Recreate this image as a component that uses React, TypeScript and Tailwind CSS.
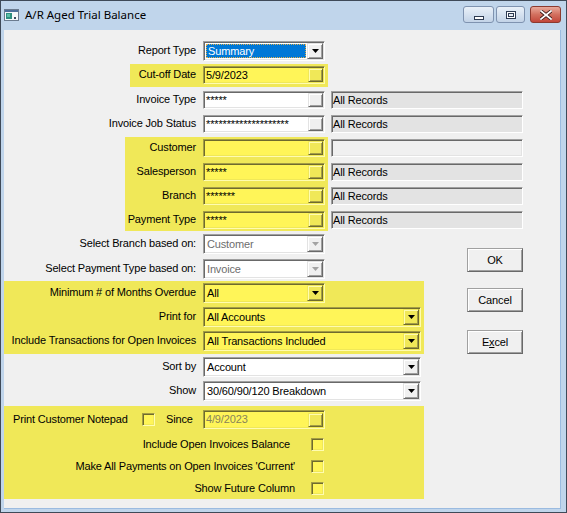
import type { ReactNode } from "react";

// classic Win32 3D edges, plain and under the yellow highlight
const SUNKEN =
  "border border-t-[#a0a0a0] border-l-[#a0a0a0] border-b-white border-r-white shadow-[inset_1px_1px_0_#696969,inset_-1px_-1px_0_#e3e3e3]";
const SUNKEN_HI =
  "border border-t-[#a39d45] border-l-[#a39d45] border-b-[#fffcb0] border-r-[#fffcb0] shadow-[inset_1px_1px_0_#6f6b2d,inset_-1px_-1px_0_#f0e858]";
const RAISED =
  "border border-t-[#e3e3e3] border-l-[#e3e3e3] border-b-[#696969] border-r-[#696969] bg-[#f0f0f0] shadow-[inset_1px_1px_0_#ffffff,inset_-1px_-1px_0_#a0a0a0]";
const RAISED_HI =
  "border border-t-[#f0e858] border-l-[#f0e858] border-b-[#6f6b2d] border-r-[#6f6b2d] bg-[#f0e858] shadow-[inset_1px_1px_0_#fffcb0,inset_-1px_-1px_0_#a39d45]";

function Arrow({ disabled }: { disabled?: boolean }) {
  return (
    <svg width="7" height="4" viewBox="0 0 7 4">
      <path d="M0 0h7L3.5 4z" fill={disabled ? "#a3a3a3" : "#000"} />
    </svg>
  );
}

function Select({
  value,
  w = "w-[122px]",
  hi,
  disabled,
  focus,
}: {
  value: string;
  w?: string;
  hi?: boolean;
  disabled?: boolean;
  focus?: boolean;
}) {
  return (
    <div
      className={`flex h-[20px] shrink-0 items-center ${w} ${
        hi ? SUNKEN_HI + " bg-[#fff558]" : SUNKEN + " bg-white"
      }`}
    >
      <div className="flex min-w-0 flex-1 items-center pl-[1px]">
        {focus ? (
          <span className="mx-[1px] flex h-[14px] flex-1 items-center border border-dotted border-[#e2b04e] bg-[#0078d7] pl-[1px] text-white">
            {value}
          </span>
        ) : (
          <span className={`pl-[2px] ${disabled ? "text-[#6d6d6d]" : ""}`}>{value}</span>
        )}
      </div>
      <span
        className={`mr-[1px] flex h-[16px] w-[16px] shrink-0 items-center justify-center ${
          hi ? RAISED_HI : RAISED
        }`}
      >
        <Arrow disabled={disabled} />
      </span>
    </div>
  );
}

function Field({
  value = "",
  hi,
  muted,
  h = "h-[18px]",
}: {
  value?: string;
  hi?: boolean;
  muted?: boolean;
  h?: string;
}) {
  return (
    <div
      className={`flex w-[122px] shrink-0 items-center ${h} ${
        hi ? SUNKEN_HI + " bg-[#fff558]" : SUNKEN + " bg-white"
      }`}
    >
      <span
        className={`min-w-0 flex-1 overflow-hidden whitespace-nowrap pl-[2px] ${
          muted ? "text-[#87845a]" : ""
        }`}
      >
        {value}
      </span>
      <span className={`mr-[1px] h-[14px] w-[15px] shrink-0 ${hi ? RAISED_HI : RAISED}`} />
    </div>
  );
}

function Info({ value }: { value?: string }) {
  return (
    <div
      className={`flex h-[18px] w-[192px] shrink-0 items-center ${SUNKEN} ${
        value ? "bg-[#e3e3e3]" : "bg-[#f0f0f0]"
      }`}
    >
      <span className="pl-[1px]">{value}</span>
    </div>
  );
}

function Check() {
  return <span className={`h-[13px] w-[13px] shrink-0 bg-[#fff558] ${SUNKEN_HI}`} />;
}

function Btn({ children }: { children: ReactNode }) {
  return (
    <div className="flex h-[24px] w-[56px] items-center justify-center border border-t-[#a0a0a0] border-l-[#a0a0a0] border-b-[#696969] border-r-[#696969] bg-[#f0f0f0] shadow-[inset_1px_1px_0_#ffffff,inset_-1px_-1px_0_#a0a0a0]">
      {children}
    </div>
  );
}

function Row({
  label,
  lw = "w-[199px]",
  children,
  className = "",
}: {
  label: string;
  lw?: string;
  children: ReactNode;
  className?: string;
}) {
  return (
    <div className={`flex items-center ${className}`}>
      <span className={`${lw} -mt-[2px] shrink-0 whitespace-nowrap pr-[7px] text-right`}>{label}</span>
      {children}
    </div>
  );
}

function AppIcon() {
  return (
    <svg width="15" height="12" viewBox="0 0 15 12">
      <rect x="0.5" y="0.5" width="14" height="11" fill="#f4f7fa" stroke="#6b7b8f" />
      <rect x="1" y="1" width="13" height="2" fill="#4d6f9a" />
      <rect x="2" y="4" width="6" height="6" fill="#2f8f80" />
      <rect x="3" y="5" width="3" height="3" fill="#5cc0a8" />
      <rect x="10" y="8" width="2" height="2" fill="#3c4a5c" />
    </svg>
  );
}

function CaptionButton({ kind }: { kind: "min" | "max" | "close" }) {
  if (kind === "close") {
    return (
      <div className="flex h-[17px] w-[31px] items-center justify-center rounded-[3px] border border-[#8c3a2f] bg-gradient-to-b from-[#e8a99b] via-[#d2705f] to-[#c2463a]">
        <svg width="12" height="10" viewBox="0 0 12 10">
          <path
            d="M1 1l10 8M11 1L1 9"
            stroke="#3a1a16"
            strokeWidth="3.4"
            strokeLinecap="square"
          />
          <path d="M1 1l10 8M11 1L1 9" stroke="#fff" strokeWidth="1.8" strokeLinecap="square" />
        </svg>
      </div>
    );
  }
  return (
    <div
      className={`flex h-[17px] items-center justify-center rounded-[3px] border border-[#7f93b0] bg-gradient-to-b from-[#eaf1f9] via-[#d6e2f0] to-[#c3d3e7] ${
        kind === "min" ? "w-[31px]" : "w-[29px]"
      }`}
    >
      {kind === "min" ? (
        <svg width="10" height="12" viewBox="0 0 10 12">
          <rect x="0.5" y="7.5" width="9" height="3" fill="#fff" stroke="#2d3b52" />
        </svg>
      ) : (
        <svg width="10" height="8" viewBox="0 0 10 8">
          <rect x="0.5" y="0.5" width="9" height="7" fill="#fff" stroke="#2d3b52" />
          <rect x="2.5" y="2.5" width="5" height="3" fill="#e8eef6" stroke="#2d3b52" />
        </svg>
      )}
    </div>
  );
}

export default function App() {
  return (
    <div className="h-[513px] w-[567px] overflow-hidden border border-[#3f4a58] bg-[#c0d5eb] font-['Liberation_Sans',Arial,sans-serif] text-[11px] leading-[13px] tracking-[-0.15px] text-black">
      {/* Title bar */}
      <div className="flex h-[29px] items-start">
        <div className="ml-[3px] mt-[8px]">
          <AppIcon />
        </div>
        <span className="ml-[6px] mt-[6px] font-['Noto_Sans',sans-serif] text-[11.5px] leading-[16px] tracking-normal text-black">
          A/R Aged Trial Balance
        </span>
        <div className="ml-auto mr-[5px] mt-[5px] flex">
          <CaptionButton kind="min" />
          <div className="ml-[2px]">
            <CaptionButton kind="max" />
          </div>
          <div className="ml-[5px]">
            <CaptionButton kind="close" />
          </div>
        </div>
      </div>

      {/* Client area */}
      <div className="ml-[3px] mr-[5px] flex h-[479px] flex-col border-r border-b border-[#9bbbe0] bg-[#f0f0f0] pt-[11px]">
        <Row label="Report Type">
          <Select value="Summary" focus />
        </Row>

        <div className="ml-[126px] mt-[3px] w-[198px] bg-[#f0e858] pt-[2px] pb-[3px]">
          <Row label="Cut-off Date" lw="w-[73px]">
            <Field value="5/9/2023" hi />
          </Row>
        </div>

        <Row label="Invoice Type" className="mt-[4px]">
          <Field value="*****" />
          <div className="ml-[6px]">
            <Info value="All Records" />
          </div>
        </Row>
        <Row label="Invoice Job Status" className="mt-[6px]">
          <Field value="********************" />
          <div className="ml-[6px]">
            <Info value="All Records" />
          </div>
        </Row>

        <div className="mt-[4px] flex items-start">
          <div className="ml-[121px] flex w-[203px] flex-col gap-[6px] bg-[#f0e858] pt-[2px] pb-[2px]">
            <Row label="Customer" lw="w-[78px]">
              <Field hi />
            </Row>
            <Row label="Salesperson" lw="w-[78px]">
              <Field value="*****" hi />
            </Row>
            <Row label="Branch" lw="w-[78px]">
              <Field value="*******" hi />
            </Row>
            <Row label="Payment Type" lw="w-[78px]">
              <Field value="*****" hi />
            </Row>
          </div>
          <div className="ml-[3px] flex flex-col gap-[6px] pt-[2px]">
            <Info />
            <Info value="All Records" />
            <Info value="All Records" />
            <Info value="All Records" />
          </div>
        </div>

        <div className="mt-[3px] flex items-start">
          <div className="flex w-[420px] flex-col">
            <Row label="Select Branch based on:">
              <Select value="Customer" disabled />
            </Row>
            <Row label="Select Payment Type based on:" className="mt-[5px]">
              <Select value="Invoice" disabled />
            </Row>
            <div className="mt-[2px] flex flex-col gap-[4px] bg-[#f0e858] pt-[2px] pb-[3px]">
              <Row label="Minimum # of Months Overdue">
                <Select value="All" hi />
              </Row>
              <Row label="Print for">
                <Select value="All Accounts" w="w-[218px]" hi />
              </Row>
              <Row label="Include Transactions for Open Invoices">
                <Select value="All Transactions Included" w="w-[218px]" hi />
              </Row>
            </div>
          </div>
          <div className="ml-[43px] flex flex-col pt-[14px]">
            <Btn>OK</Btn>
            <div className="mt-[16px]">
              <Btn>Cancel</Btn>
            </div>
            <div className="mt-[18px]">
              <Btn>
                <span>
                  E<span className="underline">x</span>cel
                </span>
              </Btn>
            </div>
          </div>
        </div>

        <Row label="Sort by" className="mt-[3px]">
          <Select value="Account" w="w-[218px]" />
        </Row>
        <Row label="Show" className="mt-[4px]">
          <Select value="30/60/90/120 Breakdown" w="w-[218px]" />
        </Row>

        <div className="mt-[5px] flex w-[420px] flex-col bg-[#f0e858] pt-[4px] pb-[4px]">
          <div className="flex h-[19px] items-center">
            <span className="w-[138px] shrink-0 whitespace-nowrap pl-[9px]">Print Customer Notepad</span>
            <Check />
            <span className="ml-[11px] w-[37px] shrink-0">Since</span>
            <Field value="4/9/2023" hi muted h="h-[19px]" />
          </div>
          <div className="mt-[9px] flex h-[13px] items-center">
            <span className="w-[307px] shrink-0 whitespace-nowrap pr-[21px] text-right">
              Include Open Invoices Balance
            </span>
            <Check />
          </div>
          <div className="mt-[9px] flex h-[13px] items-center">
            <span className="w-[307px] shrink-0 whitespace-nowrap pr-[16px] text-right">
              Make All Payments on Open Invoices 'Current'
            </span>
            <Check />
          </div>
          <div className="mt-[9px] flex h-[13px] items-center">
            <span className="w-[307px] shrink-0 whitespace-nowrap pr-[16px] text-right">
              Show Future Column
            </span>
            <Check />
          </div>
        </div>
      </div>
    </div>
  );
}
